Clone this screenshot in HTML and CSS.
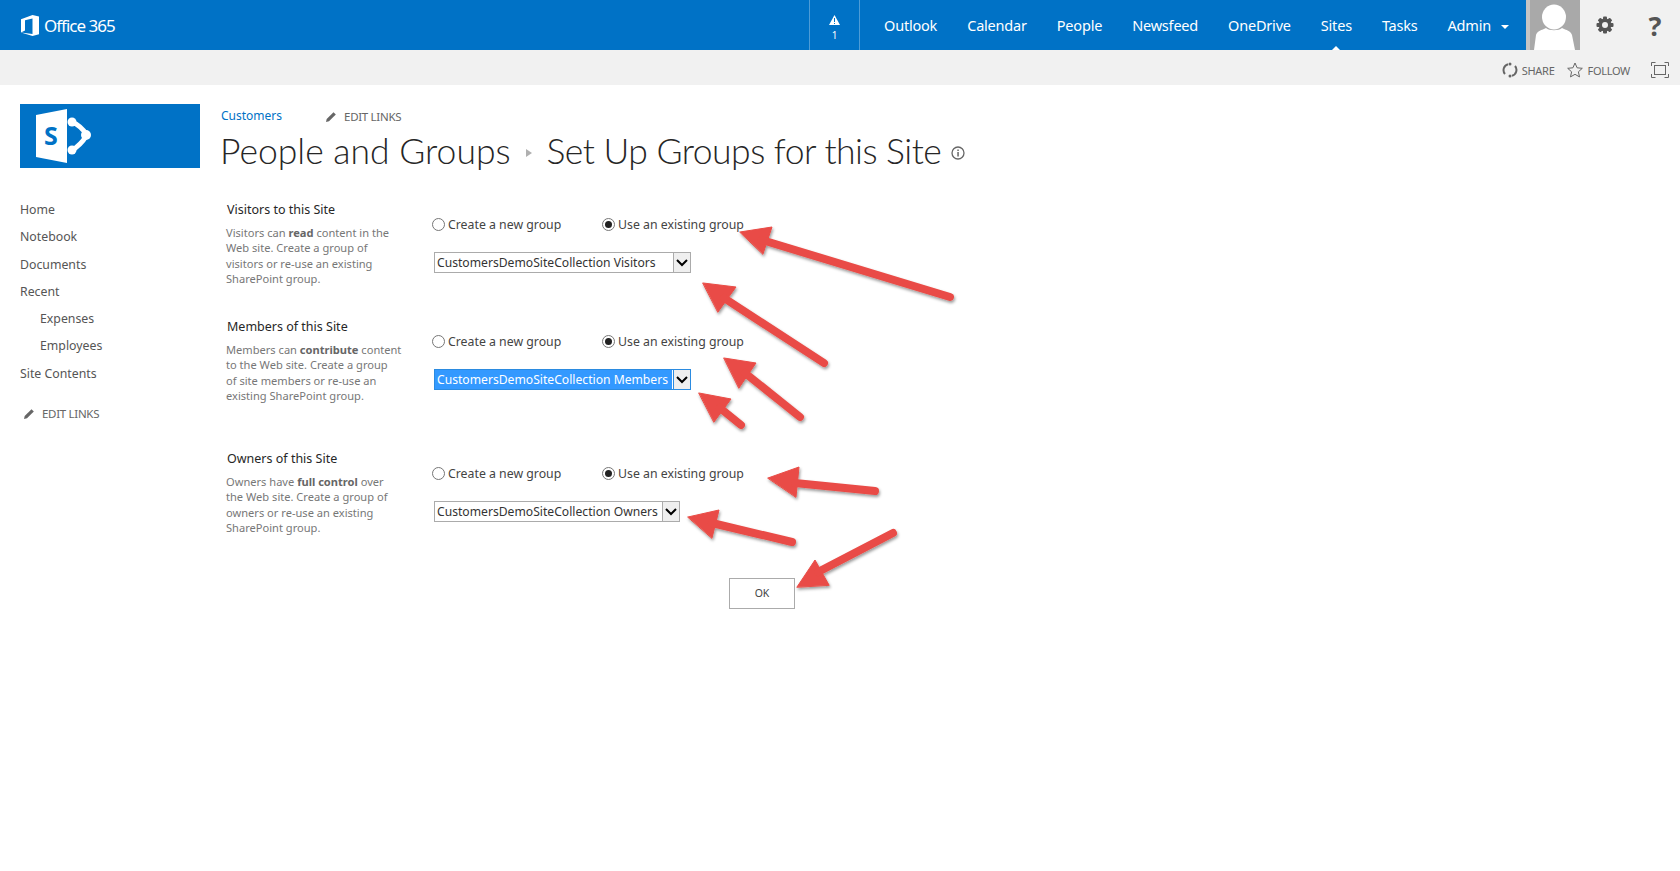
FILE: index.html
```html
<!DOCTYPE html>
<html lang="en">
<head>
<meta charset="utf-8">
<title>People and Groups - Set Up Groups for this Site</title>
<link rel="stylesheet" href="styles.css">
</head>
<body>
<header class="topbar">
  <div class="brand">
    <svg class="brand-icon" width="18" height="21" viewBox="0 0 18 21"><path fill="#fff" d="M0 4.200 11.500 0 18 1.600v17.600L11.500 21 0 17.400l11.500 1.500V3.600L4 5.200v10.400L0 17.400z"/></svg>
    <span class="brand-name">Office 365</span>
  </div>
  <div class="top-right">
    <div class="alert">
      <svg width="11" height="10" viewBox="0 0 11 10"><path fill="#fff" d="M5.500 0 11 10H0z"/><rect x="5" y="3" width="1" height="4" fill="#0072c6"/><rect x="5" y="8" width="1" height="1" fill="#0072c6"/></svg>
      <span>1</span>
    </div>
    <nav class="top-nav">
      <a>Outlook</a><a>Calendar</a><a>People</a><a>Newsfeed</a><a>OneDrive</a><a class="current">Sites</a><a>Tasks</a><a class="admin">Admin<i class="caret"></i></a>
    </nav>
    <div class="avatar">
      <svg width="54" height="50" viewBox="0 0 54 50"><ellipse cx="28" cy="17" rx="12" ry="12.500" fill="#fff"/><path fill="#fff" d="M8 50 10 35c1-4 6-5 10-7 3 3 13 3 16 0 4 2 9 3 10 7l3 15z"/></svg>
    </div>
    <div class="tool">
      <svg width="20" height="20" viewBox="0 0 20 20"><g fill="#555"><circle cx="10" cy="10" r="6.500"/><rect x="8" y="1.500" width="4" height="17" rx="1"/><rect x="8" y="1.500" width="4" height="17" rx="1" transform="rotate(45 10 10)"/><rect x="8" y="1.500" width="4" height="17" rx="1" transform="rotate(90 10 10)"/><rect x="8" y="1.500" width="4" height="17" rx="1" transform="rotate(135 10 10)"/></g><circle cx="10" cy="10" r="3" fill="#f1f1f1"/></svg>
    </div>
    <div class="tool help">?</div>
  </div>
</header>

<div class="subbar">
  <a class="sub-action">
    <svg width="16" height="16" viewBox="0 0 16 16"><path fill="none" stroke="#666" stroke-width="2" d="M3 12A6 6 0 0 1 6 2.300M13 4a6 6 0 0 1-3 9.700"/><circle cx="8" cy="2" r="1.500" fill="#666"/><circle cx="8" cy="14" r="1.500" fill="#666"/></svg>
    <span>SHARE</span>
  </a>
  <a class="sub-action">
    <svg width="16" height="16" viewBox="0 0 16 16"><path fill="none" stroke="#666" d="m8 1 2.100 4.800 5.200.5-3.900 3.500 1.100 5.100L8 12.300l-4.500 2.600 1.100-5.100L.7 6.300l5.200-.5z"/></svg>
    <span>FOLLOW</span>
  </a>
  <svg class="focus" width="18" height="16" viewBox="0 0 18 16"><path fill="none" stroke="#666" d="M.5 4V.5h4M13.500.5h4V4M17.500 12v3.500h-4M4.500 15.500h-4V12"/><rect x="3.500" y="3.500" width="11" height="9" fill="none" stroke="#666"/></svg>
</div>

<main class="page">
  <aside class="side">
    <div class="logo">
      <svg width="180" height="64" viewBox="0 0 180 64">
        <path fill="#fff" d="M16 11 47 5v54l-31-6z"/>
        <text class="logo-s" x="24" y="41">S</text>
        <path fill="none" stroke="#fff" stroke-width="5" d="M52 18Q60 21 67 31 60 42 52 46"/>
        <g fill="#fff"><circle cx="52" cy="18" r="4.500"/><circle cx="66" cy="31" r="5"/><circle cx="52" cy="46" r="4.500"/></g>
      </svg>
    </div>
    <nav class="quick">
      <a>Home</a>
      <a>Notebook</a>
      <a>Documents</a>
      <a>Recent</a>
      <a class="sub">Expenses</a>
      <a class="sub">Employees</a>
      <a>Site Contents</a>
      <a class="edit-links">
        <svg class="pencil" width="12" height="12" viewBox="0 0 12 12"><path fill="#666" d="M8.500 1.200 10.800 3.500 4 10.300 1 11l.7-3z"/></svg>EDIT LINKS
      </a>
    </nav>
  </aside>

  <section class="content">
    <div class="crumbs">
      <a class="site-link">Customers</a>
      <a class="crumb-edit">
        <svg class="pencil" width="12" height="12" viewBox="0 0 12 12"><path fill="#666" d="M8.500 1.200 10.800 3.500 4 10.300 1 11l.7-3z"/></svg>EDIT LINKS
      </a>
    </div>
    <h1 class="title">
      <span>People and Groups</span>
      <svg class="title-sep" width="6" height="8" viewBox="0 0 6 8"><path fill="#b0b0b0" d="M0 0 6 4 0 8z"/></svg>
      <span class="title-page">Set Up Groups for this Site</span>
      <svg class="info" width="14" height="14" viewBox="0 0 14 14"><circle cx="7" cy="7" r="6" fill="none" stroke="#666" stroke-width="1.300"/><rect x="6.300" y="6" width="1.500" height="4.500" fill="#666"/><rect x="6.300" y="3.500" width="1.500" height="1.500" fill="#666"/></svg>
    </h1>

    <div class="group group-visitors">
      <div class="desc">
        <h2>Visitors to this Site</h2>
        <p>Visitors can <b>read</b> content in the Web site. Create a group of visitors or re-use an existing SharePoint group.</p>
      </div>
      <div class="controls">
        <div class="radios">
          <label class="radio"><i class="dot"></i>Create a new group</label>
          <label class="radio on"><i class="dot"></i>Use an existing group</label>
        </div>
        <div class="select"><span class="value">CustomersDemoSiteCollection Visitors</span><span class="drop"><svg width="12" height="8" viewBox="0 0 12 8"><path fill="none" stroke="#000" stroke-width="2" d="m1 1 5 5 5-5"/></svg></span></div>
      </div>
    </div>

    <div class="group group-members">
      <div class="desc">
        <h2>Members of this Site</h2>
        <p>Members can <b>contribute</b> content to the Web site. Create a group<br>of site members or re-use an existing SharePoint group.</p>
      </div>
      <div class="controls">
        <div class="radios">
          <label class="radio"><i class="dot"></i>Create a new group</label>
          <label class="radio on"><i class="dot"></i>Use an existing group</label>
        </div>
        <div class="select focused"><span class="value">CustomersDemoSiteCollection Members</span><span class="drop"><svg width="12" height="8" viewBox="0 0 12 8"><path fill="none" stroke="#000" stroke-width="2" d="m1 1 5 5 5-5"/></svg></span></div>
      </div>
    </div>

    <div class="group group-owners">
      <div class="desc">
        <h2>Owners of this Site</h2>
        <p>Owners have <b>full control</b> over the Web site. Create a group of owners or re-use an existing SharePoint group.</p>
      </div>
      <div class="controls">
        <div class="radios">
          <label class="radio"><i class="dot"></i>Create a new group</label>
          <label class="radio on"><i class="dot"></i>Use an existing group</label>
        </div>
        <div class="select owners"><span class="value">CustomersDemoSiteCollection Owners</span><span class="drop"><svg width="12" height="8" viewBox="0 0 12 8"><path fill="none" stroke="#000" stroke-width="2" d="m1 1 5 5 5-5"/></svg></span></div>
      </div>
    </div>

    <div class="actions"><button class="ok" type="button">OK</button></div>
  </section>
</main>

<svg class="arrows" width="1680" height="871" viewBox="0 0 1680 871">
  <defs><filter id="sh" x="-20%" y="-20%" width="140%" height="140%"><feDropShadow dx="1" dy="2" stdDeviation="1.800" flood-color="#000" flood-opacity=".4"/></filter></defs>
  <g filter="url(#sh)" fill="#e94c46" stroke="#e94c46" stroke-linecap="round" stroke-linejoin="round">
    <path stroke-width="1" d="M740 232 772 227 763 254z"/><path stroke-width="8" d="M762 240 950 297"/>
    <path stroke-width="1" d="M703 283 736 287 718 312z"/><path stroke-width="8" d="M724 298 824 363"/>
    <path stroke-width="1" d="M724 358 756 363 739 388z"/><path stroke-width="8" d="M745 373 800 417"/>
    <path stroke-width="1" d="M699 393 731 399 714 422z"/><path stroke-width="8" d="M720 408 741 425"/>
    <path stroke-width="1" d="M768 478 799 467 796 497z"/><path stroke-width="8" d="M795 483 875 491"/>
    <path stroke-width="1" d="M688 517 719 510 712 538z"/><path stroke-width="8" d="M712 523 792 542"/>
    <path stroke-width="1" d="M797 587 815 560 829 585z"/><path stroke-width="8" d="M818 572 893 533"/>
  </g>
</svg>
</body>
</html>
```
FILE: styles.css
```css
* { box-sizing: border-box; }
html, body { margin: 0; padding: 0; }
body {
  position: relative;
  height: 871px;
  overflow: hidden;
  background: #fff;
  font-family: "Noto Sans", "Open Sans", "Liberation Sans", sans-serif;
  color: #444;
}
a { color: inherit; text-decoration: none; }

.topbar {
  display: flex;
  justify-content: space-between;
  height: 50px;
  background: #0072c6;
  color: #fff;
}
.brand { display: flex; align-items: center; padding-left: 21px; gap: 5px; }
.brand-icon { display: block; }
.brand-name { font-size: 17px; letter-spacing: -1px; }
.top-right { display: flex; align-items: stretch; }
.alert {
  width: 51px;
  border-left: 1px solid #4d9cd7;
  border-right: 1px solid #4d9cd7;
  display: flex;
  flex-direction: column;
  align-items: center;
  padding-top: 15px;
  gap: 4px;
  font-size: 10px;
  line-height: 13px;
}
.alert svg { display: block; }
.top-nav { display: flex; align-items: center; padding: 0 2px 0 9px; position: relative; }
.top-nav a { font-size: 14.500px; letter-spacing: -0.2px; padding: 0 15px; position: relative; line-height: 50px; }
.top-nav .current::after {
  content: "";
  position: absolute;
  left: 50%;
  bottom: 0;
  margin-left: -4px;
  border: 4px solid transparent;
  border-top: 0;
  border-bottom-color: #fff;
}
.caret {
  display: inline-block;
  margin-left: 10px;
  vertical-align: middle;
  border: 4px solid transparent;
  border-bottom: 0;
  border-top-color: #fff;
}
.avatar { width: 54px; height: 50px; background: #a9a9a9; border-left: 4px solid #c4c4c4; overflow: hidden; }
.avatar svg { display: block; margin-left: -4px; }
.tool { width: 50px; background: #f1f1f1; display: flex; align-items: center; justify-content: center; }
.help { color: #555; font-size: 27px; font-weight: 700; }

.subbar {
  display: flex;
  justify-content: flex-end;
  align-items: center;
  height: 35px;
  padding: 5px 11px 0 0;
  background: #f1f1f1;
  color: #666;
  font-size: 11px;
}
.sub-action { display: flex; align-items: center; gap: 4px; margin-right: 13px; letter-spacing: -0.3px; }
.focus { margin-left: 8px; }

.page { display: flex; align-items: flex-start; }
.side { width: 220px; padding: 19px 0 0 20px; flex: none; }
.logo { width: 180px; height: 64px; background: #0072c6; }
.logo svg { display: block; }
.logo-s { font-family: "Open Sans", sans-serif; font-weight: 700; font-size: 25px; fill: #0072c6; }
.quick { display: flex; flex-direction: column; padding-top: 28px; font-size: 12.300px; color: #555; }
.quick a { height: 27.300px; line-height: 27px; }
.quick .sub { padding-left: 20px; }
.quick .edit-links { margin-top: 13px; font-size: 11.500px; letter-spacing: -0.3px; color: #666; padding-left: 3px; display: flex; align-items: center; }
.pencil { margin-right: 7px; flex: none; }

.content { flex: 1; min-width: 0; padding-top: 22px; }
.crumbs { display: flex; align-items: center; height: 17px; gap: 43px; padding-left: 1px; font-size: 12px; }
.site-link { color: #0072c6; }
.crumb-edit { display: flex; align-items: center; color: #666; font-size: 11.500px; letter-spacing: -0.3px; padding-top: 2px; }
.title {
  display: flex;
  align-items: center;
  margin: 3px 0 0;
  height: 46px;
  font-family: Lato, "Noto Sans", sans-serif;
  font-size: 35.500px;
  font-weight: 300;
  color: #262626;
  white-space: nowrap;
}
.title-page { letter-spacing: -0.52px; }
.title-sep { margin: 6px 15px 0 15px; }
.info { margin: 6px 0 0 10px; }

.group { display: flex; }
.group-visitors { height: 117px; margin-top: 27px; }
.group-members { height: 132px; }
.desc { width: 214px; padding-left: 6px; flex: none; }
.desc h2 { margin: 1px 0 0 1px; font-size: 12.500px; line-height: 18px; font-weight: 400; color: #262626; }
.desc p { margin: 5.500px 0 0; width: 177px; font-size: 11.100px; line-height: 15.600px; color: #777; }
.desc b { font-weight: 700; color: #666; }
.radios { display: flex; padding-top: 15px; height: 52px; font-size: 12.300px; color: #444; }
.radio { display: flex; align-items: center; height: 18px; gap: 3px; width: 170px; white-space: nowrap; margin-left: -2px; margin-right: 2px; }
.dot { width: 13px; height: 13px; border: 1px solid #767676; border-radius: 50%; background: #fff; position: relative; flex: none; }
.on .dot::after { content: ""; position: absolute; left: 2px; top: 2px; width: 7px; height: 7px; border-radius: 50%; background: #222; }
.select {
  display: flex;
  width: 257px;
  height: 21px;
  border: 1px solid #ababab;
  background: #fff;
  font-size: 12.150px;
  line-height: 19px;
  color: #333;
}
.select .value { flex: 1; min-width: 0; padding-left: 2px; white-space: nowrap; }
.select .drop { width: 18px; flex: none; background: #efefef; border: 1px solid #ababab; display: flex; align-items: center; justify-content: center; margin: -1px -1px -1px 0; }
.select.owners { width: 246px; }
.select.focused { border-color: #2b8be0; }
.select.focused .value { background: #3399ff; color: #fff; margin-right: 1px; }
.select.focused .drop { border-color: #2b8be0; }

.actions { padding: 42px 0 0 509px; }
.ok { display: block; width: 66px; height: 31px; padding: 0; border: 1px solid #ababab; background: #fff; font-family: inherit; font-size: 10.500px; color: #444; }

.arrows { position: absolute; left: 0; top: 0; pointer-events: none; }
```
